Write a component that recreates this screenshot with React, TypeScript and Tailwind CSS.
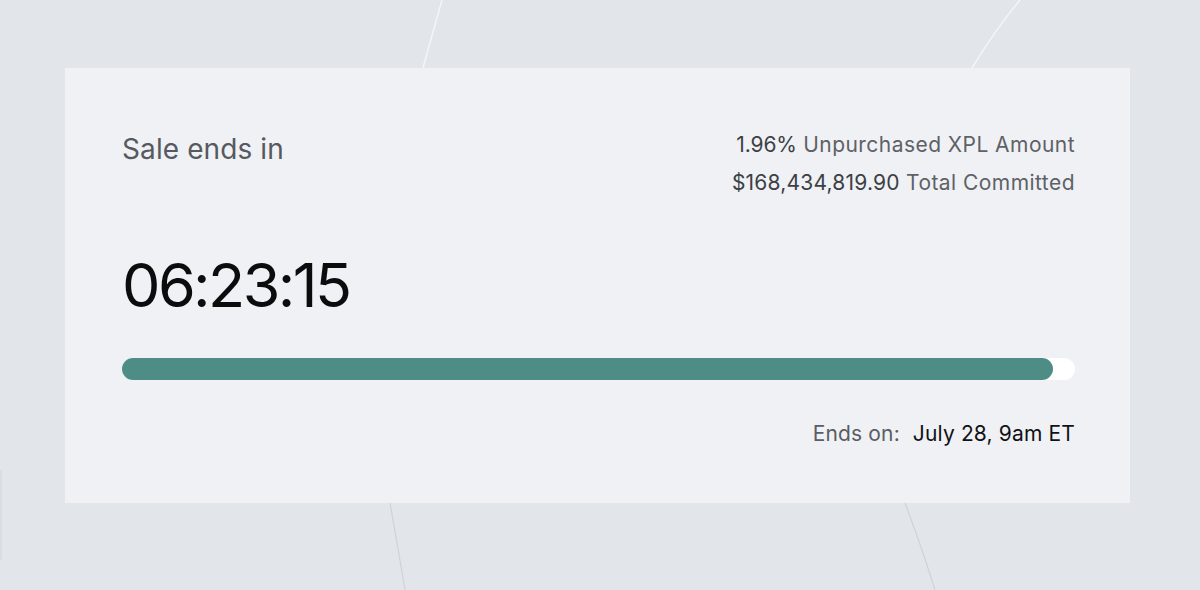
import React from "react";

const App = () => {
  const progress = 97.7;

  return (
    <div className="relative w-[1200px] h-[590px] overflow-hidden bg-[#e2e6ea] font-['Inter',sans-serif]">
      {/* faint background strokes */}
      <svg className="absolute inset-0" width="1200" height="590" viewBox="0 0 1200 590" fill="none">
        <path d="M442 0 Q432 35 423 68" stroke="#f4f5f7" strokeWidth="1.5" />
        <path d="M1020 0 Q995 30 972 68" stroke="#f4f5f7" strokeWidth="1.5" />
        <path d="M390 503 Q398 548 405 590" stroke="#cfd3d8" strokeWidth="1.2" />
        <path d="M905 503 Q922 548 935 590" stroke="#cfd3d8" strokeWidth="1.2" />
        <path d="M1 470 L1 560" stroke="#d2d6db" strokeWidth="1" />
      </svg>

      <div className="relative mx-[65px] mt-[68px] h-[435px] w-[1065px] bg-[#eff1f4] pl-[57px] pr-[55px] pt-[66px]">
        <div className="flex justify-between items-start">
          <div className="text-[28px] leading-none text-[#56595f] pt-[1px] tracking-[0.1px]">Sale ends in</div>
          <div className="flex flex-col items-end gap-[17px] text-[21px] leading-none text-[#5e6167] tracking-[0.45px]">
            <div>
              <span className="text-[#3c3f44] tracking-[-0.1px]">1.96%</span> Unpurchased XPL Amount
            </div>
            <div>
              <span className="text-[#3c3f44] tracking-[0.2px]">$168,434,819.90</span> Total Committed
            </div>
          </div>
        </div>

        <div className="mt-[62px] text-[61px] leading-none text-[#0c0c0d] tracking-[-2.6px]">06:23:15</div>

        <div className="mt-[42px] h-[22px] w-full rounded-full bg-white">
          <div className="h-full rounded-full bg-[#4e8c86]" style={{ width: `${progress}%` }} />
        </div>

        <div className="mt-[43px] flex justify-end items-baseline gap-[13px] text-[21px] leading-none tracking-[0.15px]">
          <span className="text-[#5a5d63]">Ends on:</span>
          <span className="text-[#111214]">July 28, 9am ET</span>
        </div>
      </div>
    </div>
  );
};

export default App;
